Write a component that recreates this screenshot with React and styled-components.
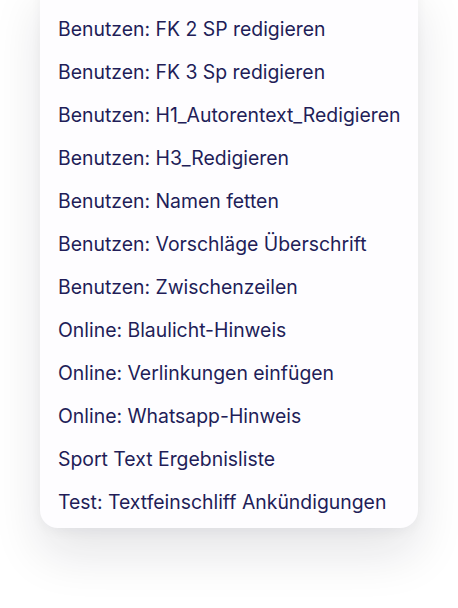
import React from "react";
import { styled, createGlobalStyle } from "styled-components";

const Global = createGlobalStyle`
  html, body {
    margin: 0;
    background: #ffffff;
    font-family: Inter, "Noto Sans", sans-serif;
  }
`;

const items = [
  "Benutzen: FK 2 SP redigieren",
  "Benutzen: FK 3 Sp redigieren",
  "Benutzen: H1_Autorentext_Redigieren",
  "Benutzen: H3_Redigieren",
  "Benutzen: Namen fetten",
  "Benutzen: Vorschläge Überschrift",
  "Benutzen: Zwischenzeilen",
  "Online: Blaulicht-Hinweis",
  "Online: Verlinkungen einfügen",
  "Online: Whatsapp-Hinweis",
  "Sport Text Ergebnisliste",
  "Test: Textfeinschliff Ankündigungen",
];

const App = () => {
  return (
    <Page>
      <Global />
      <Menu>
        {items.map((item) => (
          <Item key={item}>{item}</Item>
        ))}
      </Menu>
    </Page>
  );
};

export default App;

const Page = styled.div`
  width: 458px;
  height: 608px;
  overflow: hidden;
  padding: 0 40px;
  box-sizing: border-box;
`;

const Menu = styled.ul`
  list-style: none;
  margin: -20px 0 0;
  padding: 27px 0 5px;
  width: 378px;
  background: #fefdff;
  border-radius: 0 0 18px 18px;
  box-shadow: 0 26px 50px rgba(20, 20, 40, 0.11), 0 4px 12px rgba(20, 20, 40, 0.04);
`;

const Item = styled.li`
  height: 43px;
  display: flex;
  align-items: center;
  padding: 0 18px;
  font-size: 19.4px;
  color: #221d58;
  white-space: nowrap;
  cursor: pointer;
`;
